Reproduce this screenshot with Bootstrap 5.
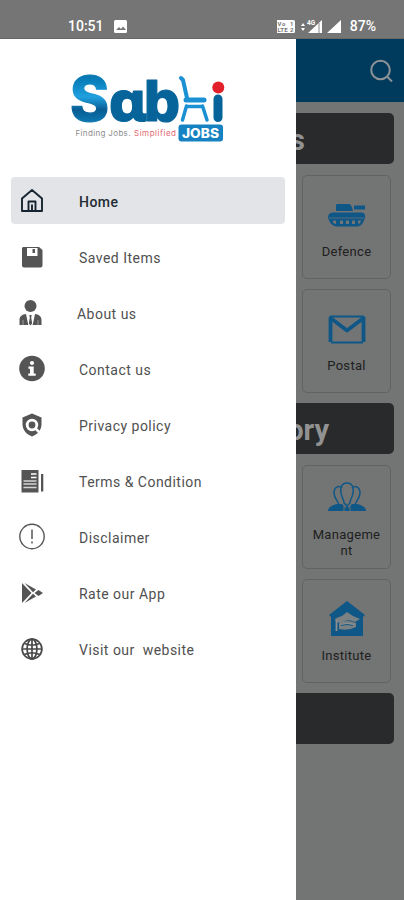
<!DOCTYPE html>
<html lang="en">
<head>
<meta charset="utf-8">
<meta name="viewport" content="width=device-width, initial-scale=1">
<title>Sabhi Jobs</title>
<link href="https://cdn.jsdelivr.net/npm/bootstrap@5.3.0/dist/css/bootstrap.min.css" rel="stylesheet">
<style>
body{font-family:Roboto,"Liberation Sans",sans-serif;width:404px;height:900px;background:#fff}
.status{height:39px;background:#757575;color:#fff;font-size:14px;font-weight:500;line-height:20px;padding:16px 28px 0 68px;border-bottom:1px solid #686868}
.drawer{width:296px;padding:33px 11px 0}
.logo{margin:0 0 32px 57px}
.menu-row{height:47px;padding-left:7px;margin-bottom:9.1px;border-radius:4px;font-size:14px;letter-spacing:.48px;color:#505050;white-space:pre}
.menu-row svg{width:28px;height:28px;margin-right:33px}
.menu-row.about svg{margin-right:31px}
.menu-row span{padding-top:3px}
.menu-row.current{background:#e2e4e7;color:#222b33;font-weight:500;width:274px;letter-spacing:.45px}
.page{width:108px;background:#737474}
.topbar{height:63px;background:#003b5d;padding-right:10px;margin-bottom:11px}
.heading{height:51px;width:98px;background:#282a2b;border-radius:0 5px 5px 0;color:#929292;font-size:29px;font-weight:700;line-height:1;white-space:nowrap;padding-top:4px;margin-bottom:11px}
.heading.first{padding-right:89px}
.heading.second{padding-right:65px}
.tile{width:89px;height:104px;margin:0 0 10px 6px;border:1px solid #626262;border-radius:5px;color:#202020;font-size:13px;line-height:16px;letter-spacing:.3px;padding-top:20px}
.tile.two-line{padding-top:12px}
.tile svg{width:40px;height:40px;margin-bottom:8px;flex:none}
.tile.two-line svg{margin-bottom:9px}
</style>
<script src="https://cdn.jsdelivr.net/npm/bootstrap@5.3.0/dist/js/bootstrap.bundle.min.js"></script>
</head>
<body class="d-flex flex-column overflow-hidden">
<header class="status d-flex justify-content-between flex-shrink-0">
  <div class="d-flex"><span>10:51</span>
    <svg class="ms-2" width="16" height="20" viewBox="0 0 16 20"><rect x="2" y="4" width="13" height="13" rx="1.5" fill="#fff"/><path d="M4 14l3-3 2 2 2-2.500 3 3.500z" fill="#757575"/></svg></div>
  <div class="d-flex">
    <svg width="73" height="20" viewBox="1 0 73 20"><rect x="0" y="4" width="19" height="13" rx="1.500" fill="#fff"/><g font-family="Roboto,sans-serif" font-weight="700" fill="#757575"><text x="1.500" y="10" font-size="6" textLength="8">Vo</text><text x="1.500" y="16" font-size="6" textLength="10">LTE</text><text x="14" y="10" font-size="6">1</text><text x="14" y="16" font-size="6">2</text></g><path d="M25 10l2-3 2 3zm0 2h4l-2 3zM32 17L46 4v13zM51 17L65 4v13z" fill="#fff"/><text x="31" y="9" font-size="6.500" font-family="Roboto,sans-serif" font-weight="700" fill="#fff">4G</text><path d="M43 7v10" stroke="#888"/></svg>
    <span>87%</span></div>
</header>
<div class="d-flex flex-grow-1">
  <nav class="drawer flex-shrink-0">
    <svg class="logo d-block" width="160" height="73" viewBox="68 72 160 73" overflow="visible">
      <defs><linearGradient id="sg" x1="0" y1="0" x2="0" y2="1"><stop offset="0" stop-color="#07639a"/><stop offset=".25" stop-color="#087db8"/><stop offset=".48" stop-color="#20a0df"/><stop offset=".65" stop-color="#075d93"/><stop offset="1" stop-color="#1695d3"/></linearGradient></defs>
      <g font-family="Inter,sans-serif" font-weight="800" fill="#07649a" stroke="#07649a" stroke-width="1.200" stroke-linejoin="round">
        <text x="70" y="121" font-size="62" textLength="39" lengthAdjust="spacingAndGlyphs" fill="url(#sg)" stroke="url(#sg)">S</text>
        <text x="108.500" y="120.500" font-size="56" font-family="'Noto Sans','DejaVu Sans',sans-serif" textLength="38" lengthAdjust="spacingAndGlyphs">ɑ</text>
        <text x="144" y="121" font-size="56" textLength="36" lengthAdjust="spacingAndGlyphs">b</text>
      </g>
      <path d="M218 99v18.500" stroke="#07649a" stroke-width="9" stroke-linecap="round"/>
      <circle cx="218.300" cy="87.500" r="6" fill="#e2202c"/>
      <g fill="none" stroke="#1b91d3" stroke-linecap="round" stroke-linejoin="round"><path d="M181 78l2 2 4 18" stroke-width="4"/><path d="M186 100h18" stroke-width="5"/><path d="M186.500 106l-4 14M202.500 106l4.500 14M187 106.500h15" stroke-width="3.500"/></g>
      <rect x="178.500" y="124.500" width="44.500" height="17" rx="3" fill="#1682c2"/>
      <text x="182" y="137.500" font-family="Inter,sans-serif" font-size="12.500" font-weight="800" fill="#fff" textLength="37" lengthAdjust="spacingAndGlyphs">JOBS</text>
      <g font-family="Inter,sans-serif" font-size="8"><text x="75.500" y="135.500" fill="#8d8d8d" textLength="55">Finding Jobs.</text><text x="134" y="135.500" fill="#e46a70" textLength="42">Simplified</text></g>
    </svg>
    <div class="menu-row current d-flex align-items-center"><svg viewBox="0 0 28 28" fill="none" stroke="#17242f" stroke-width="1.900" stroke-linejoin="round"><path d="M4 11.500L14 3l10 8.500V24H4zM10.500 24V14.500h7V24M14 17.500V24"/></svg><span>Home</span></div>
    <div class="menu-row d-flex align-items-center"><svg viewBox="0 0 28 28"><path d="M5 4h16l3.500 3v15.500a2 2 0 0 1-2 2H6a2 2 0 0 1-2-2V5z" fill="#555"/><path d="M9 5h10.500v8H9z" fill="#fff"/><path d="M14.500 6h2.500v4h-2.500z" fill="#555"/></svg><span>Saved Items</span></div>
    <div class="menu-row about d-flex align-items-center"><svg viewBox="0 0 28 28"><g fill="#555"><circle cx="12.500" cy="7" r="6"/><path d="M1.500 26v-5c0-4 3-5.500 6.500-6l2.300 11zM23.500 26v-5c0-4-3-5.500-6.500-6l-2.300 11zM11.300 16h2.400l-.5 2.500 1 6-1.700 2-1.700-2 1-6z"/></g><path d="M5 21v5M20 21v5" stroke="#bbb" stroke-width=".7"/></svg><span>About us</span></div>
    <div class="menu-row d-flex align-items-center"><svg viewBox="0 0 28 28"><circle cx="14" cy="13.500" r="12.800" fill="#555"/><circle cx="14" cy="8" r="2.100" fill="#fff"/><path d="M10.500 11.500h5.200v7h2v2.200h-7.400v-2.200H12v-4.800h-1.500z" fill="#fff"/></svg><span>Contact us</span></div>
    <div class="menu-row d-flex align-items-center"><svg viewBox="0 0 28 28"><path d="M14 2.500l9.500 4v7c0 5-4 10-9.500 12-5.500-2-9.500-7-9.500-12v-7z" fill="#555"/><circle cx="14" cy="14" r="4.800" fill="#555" stroke="#fff" stroke-width="2.800"/><path d="M17.500 17.500l6 6" stroke="#fff" stroke-width="2.500"/></svg><span>Privacy policy</span></div>
    <div class="menu-row d-flex align-items-center"><svg viewBox="0 0 28 28"><path d="M3.500 3h17v22.500h-17z" fill="#555"/><path d="M23 7h2.300v17.500H23z" fill="#555"/><path d="M13 7h5.500M13 10.500h5.500" stroke="#fff" stroke-width="1.700"/><path d="M5.500 14h13M5.500 17h13M5.500 20.500h13" stroke="#d5d5d5" stroke-width="1.700"/></svg><span>Terms &amp; Condition</span></div>
    <div class="menu-row d-flex align-items-center"><svg viewBox="0 0 28 28" fill="none" stroke="#555" stroke-width="1.400"><circle cx="14" cy="13.500" r="12.200"/><path d="M14 6.500v9.500M14 18.500v2" stroke-width="1.500"/></svg><span>Disclaimer</span></div>
    <div class="menu-row d-flex align-items-center"><svg viewBox="0 0 28 28" fill="#555"><path d="M4 4l9.500 10L4 24zM6.500 4L18 10.500l-3 2.700zM6.500 24L18 17.500l-3-2.700zM16.500 14l4-3 4.500 3-4.500 3z"/></svg><span>Rate our App</span></div>
    <div class="menu-row d-flex align-items-center"><svg viewBox="0 0 28 28" fill="none" stroke="#484848" stroke-width="1.700"><circle cx="14" cy="14" r="9.900"/><ellipse cx="14" cy="14" rx="4.900" ry="9.900"/><path d="M14 4v20M4 14h20M6.500 8.500q7.500 3.500 15 0M6.500 19.500q7.500-3.500 15 0"/></svg><span>Visit our  website</span></div>
  </nav>
  <main class="page overflow-hidden flex-shrink-0">
    <div class="topbar d-flex align-items-center justify-content-end"><svg width="26" height="26" viewBox="0 0 26 26" fill="none" stroke="#8c9296" stroke-width="2"><circle cx="12.500" cy="12" r="9.300"/><path d="M19 18.500l5 5"/></svg></div>
    <div class="heading first d-flex align-items-center justify-content-end">s</div>
    <div class="tile d-flex flex-column align-items-center text-center"><svg viewBox="0 0 40 40" fill="#0e5787"><path d="M10 8h12q3 1 4 7H9V9zM27 9.500h11v4H27z"/><path d="M5 16.500h30q4 1 3 5-2 8-7 9H9q-6-1-8-9 0-4 4-5z"/><path d="M2 22h35" stroke="#737474" stroke-width=".7"/><path d="M6 24.500h3v3.500l-3-1zM13 24.500h3V28h-3zM19 24.500h3V28h-3zM25 24.500h3V28h-3zM31 24.500h3l-1 3h-2z" fill="#737474"/></svg><span>Defence</span></div>
    <div class="tile d-flex flex-column align-items-center text-center"><svg viewBox="0 0 40 40" fill="none" stroke="#0e5787" stroke-linejoin="round"><path d="M3.500 32V8L20 20.500 36.500 8v24" stroke-width="3.800"/><path d="M3 6.500h34M4 32.500h32" stroke-width="2.200"/></svg><span>Postal</span></div>
    <div class="heading second d-flex align-items-center justify-content-end">ory</div>
    <div class="tile two-line d-flex flex-column align-items-center text-center"><svg viewBox="0 0 40 40"><g fill="none" stroke="#0e5787" stroke-width="1.500"><path d="M12 28c0-5-5-7-5-13 0-6 5-8 8-5M28 28c0-5 5-7 5-13 0-6-5-8-8-5M20 5c5 0 7 4 6 10s-3 6-3 10l-3 3-3-3c0-4-2-4-3-10s1-10 6-10z"/></g><path d="M1 33q0-5 9-7l5 0 4 4v-3h2v3l4-4h5q9 2 9 7z" fill="#0e5787"/><path d="M17 28v5M23 28v5" stroke="#737474"/></svg><span>Manageme<br>nt</span></div>
    <div class="tile d-flex flex-column align-items-center text-center"><svg viewBox="0 0 40 40"><path d="M20 1l18 14-2 2v19H4V17l-2-2z" fill="#0e5787"/><path d="M8 19q3-2 7-3l5-4 6 4 7 3-5 3q-8-4-14 1l-5-1zM12 23q8-4 17 0v4q-8 4-17 2z" fill="#7b8082"/><path d="M9.500 20v11M14 25q7-2 13 0" fill="none" stroke="#8b8f90" stroke-width="1.800"/><path d="M14 25.500q6-2 12 0" fill="none" stroke="#0e5787"/></svg><span>Institute</span></div>
    <div class="heading"></div>
  </main>
</div>
</body>
</html>
